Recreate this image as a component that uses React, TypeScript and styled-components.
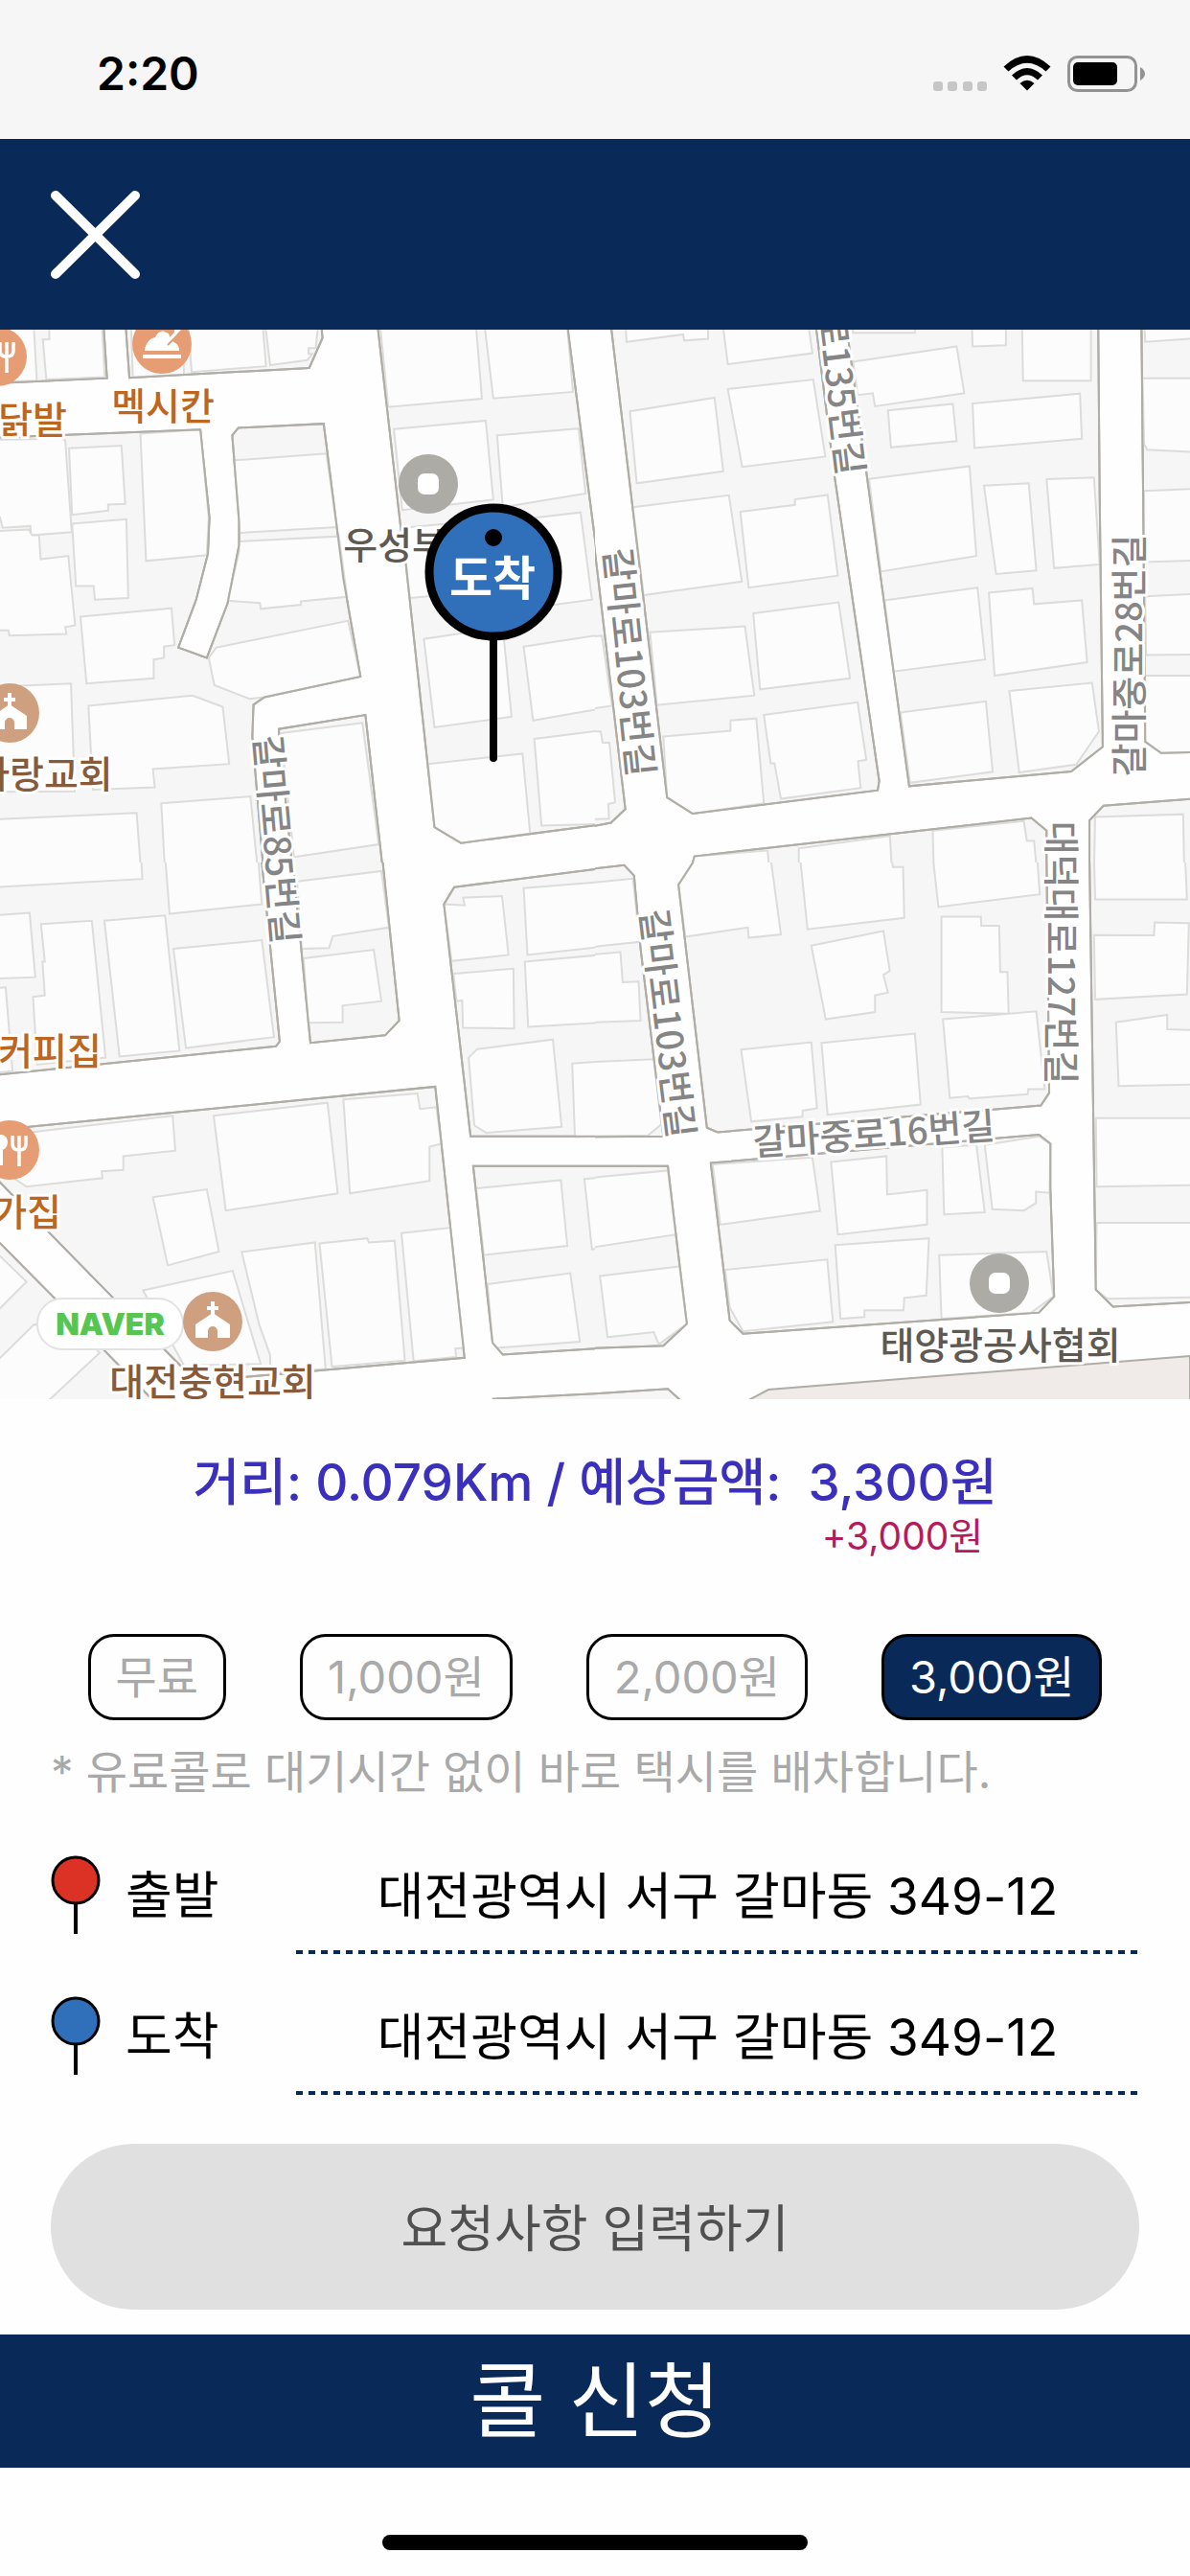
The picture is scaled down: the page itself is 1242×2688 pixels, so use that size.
import React, { useState } from "react";
import styled, { createGlobalStyle, css } from "styled-components";

const NAVY = "#092a59";
const FONT = `"Inter", "Noto Sans CJK KR", sans-serif`;
const MAP_FONT = `"Noto Sans CJK KR", "Noto Sans", sans-serif`;

const GlobalStyle = createGlobalStyle`
  *, *::before, *::after { box-sizing: border-box; }
  body { margin: 0; background: #fefefe; font-family: ${FONT}; color: #000; }
  button, input { font: inherit; color: inherit; margin: 0; }
`;

const Screen = styled.div`
  display: flex;
  flex-direction: column;
  min-height: 100vh;
`;

const StatusBar = styled.div`
  display: flex;
  align-items: center;
  justify-content: space-between;
  padding: 45px 45px 36px 101px;
  background: #f6f6f6;
`;

const Clock = styled.time`
  font-size: 48px;
  font-weight: 600;
  line-height: 64px;
`;

const StatusIcons = styled.div`
  display: flex;
  align-items: center;
`;

const Header = styled.header`
  display: flex;
  align-items: center;
  padding: 50px 50px 48px;
  background: ${NAVY};
`;

const CloseButton = styled.button`
  display: flex;
  padding: 0;
  border: 0;
  background: none;
  cursor: pointer;
`;

const MapView = styled.svg`
  display: block;
  width: 100%;
  height: auto;
  background: #fefefe;
`;

const Block = styled.polygon`
  fill: #f6f6f6;
  stroke: #b0ada6;
  stroke-width: 2px;
  vector-effect: non-scaling-stroke;
`;

const BlockEdge = styled(Block)`
  fill: none;
`;

const Building = styled.polygon`
  fill: #fcfcfc;
  stroke: #dcdcdb;
  stroke-width: 2px;
  vector-effect: non-scaling-stroke;
`;

const RoadName = styled.text`
  font: 500 38px ${MAP_FONT};
  fill: #858585;
  stroke: #fefefe;
  stroke-width: 6px;
  stroke-linejoin: round;
  paint-order: stroke;
  text-anchor: middle;
`;

const PlaceName = styled.text<{ $tone: string }>`
  font: 500 39px ${MAP_FONT};
  fill: ${(p) => p.$tone};
  stroke: #fefefe;
  stroke-width: 6px;
  stroke-linejoin: round;
  paint-order: stroke;
  text-anchor: middle;
`;

const MarkerText = styled.text`
  font: 700 49px ${MAP_FONT};
  fill: #fff;
  text-anchor: middle;
`;

const Brand = styled.text`
  font: 900 32px "Inter", sans-serif;
  fill: #57c552;
  text-anchor: middle;
`;

const Fare = styled.section`
  display: flex;
  justify-content: center;
  gap: 28px;
  padding-top: 55px;
  color: #3b2fbe;
  font-size: 53px;
  font-weight: 500;
  line-height: 64px;
`;

const FareAmount = styled.div`
  display: flex;
  flex-direction: column;
  align-items: center;
`;

const Surcharge = styled.span`
  color: #b31b5c;
  font-size: 39px;
  font-weight: 400;
  line-height: 48px;
`;

const CallOptions = styled.div`
  display: flex;
  justify-content: space-around;
  padding: 78px 53px 0;
`;

const OptionButton = styled.button<{ $active: boolean }>`
  height: 90px;
  padding: 0 26px;
  border: 3px solid #000;
  border-radius: 27px;
  background: transparent;
  color: #a9a9a9;
  font-size: 47px;
  line-height: 64px;
  cursor: pointer;
  ${(p) =>
    p.$active &&
    css`
      background: ${NAVY};
      color: #fff;
    `}
`;

const Note = styled.p`
  margin: 0;
  padding: 22px 53px 11px;
  color: #a9a9a9;
  font-size: 47px;
  line-height: 64px;
`;

const Route = styled.div`
  display: flex;
  flex-direction: column;
  padding: 0 53px;
`;

const Stop = styled.div`
  display: grid;
  grid-template-columns: 52px 152px 1fr;
  column-gap: 26px;
  height: 147px;
  font-size: 53px;
  line-height: 64px;
`;

const StopPin = styled.svg`
  margin-top: 43px;
`;

const StopLabel = styled.label`
  padding-top: 54px;
`;

const Address = styled.input`
  width: 100%;
  min-width: 0;
  height: 147px;
  padding: 18px 0 0;
  border: 0;
  outline: 0;
  text-align: center;
  background: repeating-linear-gradient(90deg, ${NAVY} 0 7px, transparent 7px 13px)
    left bottom / 100% 4px no-repeat;
`;

const Actions = styled.div`
  display: flex;
  flex-direction: column;
  gap: 26px;
  padding-top: 51px;
`;

const RequestButton = styled.button`
  height: 173px;
  margin: 0 53px;
  padding: 0 0 4px;
  border: 0;
  border-radius: 87px;
  background: #e0e0e0;
  color: #505050;
  font-size: 53px;
  cursor: pointer;
`;

const CallButton = styled.button`
  height: 139px;
  padding: 0;
  border: 0;
  background: ${NAVY};
  color: #fff;
  font-size: 86px;
  line-height: 128px;
  cursor: pointer;
`;

const HomeArea = styled.footer`
  display: flex;
  justify-content: center;
  padding: 70px 0 27px;
`;

const HomeIndicator = styled.div`
  width: 444px;
  height: 16px;
  border-radius: 8px;
  background: #000;
`;

type Tile = { x: number; y: number; blocks: string[]; buildings: string[] };

/* The street map is stored as four tiles, each on a 1568 x 1568 grid. */
const TILES: Tile[] = [
  {
    x: 0,
    y: 340,
    blocks: [
      "-20,-20 272,-20 282,153 -20,168",
      "330,-20 341,152 815,123 850,35 845,-20",
      "-20,327 528,303 552,560 548,665 517,800 470,940 545,970 600,810 630,640 630,570 612,320 628,298 853,286 905,740 950,1025 697,1085 668,1107 665,1200 695,1600 -20,1600",
      "735,1195 735,1178 963,1137 1010,1600 772,1600",
      "993,-20 1055,580 1070,700 1145,1465 1215,1511 1600,1455 1600,900 1493,-20",
    ],
    buildings: [
      "-20,-20 88,-20 97,160 -20,165",
      "130,-20 130,40 113,40 122,157 276,150 268,-20",
      "345,-20 350,150 485,142 480,-20",
      "495,-20 505,135 701,118 691,-20",
      "697,-20 712,115 810,100 823,82 813,82 813,65 832,65 840,-20",
      "-20,333 165,330 172,335 189,603 82,612 80,585 7,590 0,560 -20,560",
      "-20,600 75,595 85,612 103,612 107,682 180,672 198,875 172,880 175,900 25,905 22,890 -20,890",
      "182,358 320,350 330,520 285,522 285,540 190,552",
      "190,578 333,565 338,795 250,800 247,760 200,760",
      "370,315 528,303 550,560 545,670 385,687",
      "617,393 860,373 888,588 632,605",
      "630,630 893,615 915,792 793,805 793,815 687,827 685,810 600,803 630,660",
      "570,940 917,862 950,1025 697,1085 658,1090 565,1050 550,970",
      "212,850 452,825 460,933 432,937 432,970 405,975 405,1030 228,1045",
      "-20,1055 187,1045 197,1360 -20,1362",
      "233,1110 507,1080 587,1113 604,1280 403,1295 408,1348 245,1355",
      "-20,1442 360,1423 372,1600 -20,1600",
      "425,1395 660,1375 680,1600 435,1600",
      "740,1190 955,1160 998,1515 775,1552",
      "1000,-20 1253,-20 1270,213 1023,237",
      "1275,-20 1300,212 1510,193 1493,-20",
      "1038,302 1280,277 1300,508 1060,538",
      "1310,320 1525,300 1543,490 1325,530",
      "1060,590 1310,565 1330,770 1080,795",
      "1340,570 1530,545 1560,800 1360,830",
      "1117,915 1325,880 1348,1142 1145,1173",
      "1380,937 1600,900 1600,1115 1405,1153",
      "1128,1280 1377,1250 1397,1483 1215,1511 1145,1465",
      "1408,1207 1600,1180 1600,1455 1427,1460",
    ],
  },
  {
    x: 621,
    y: 340,
    blocks: [
      "-20,460 0,660 80,1412 42,1452 -20,1465",
      "40,-20 190,1378 257,1425 745,1357 749,1330 630,430 580,-20",
      "660,-20 828,1345 1255,1302 1338,1230 1330,500 1326,-20",
      "1440,-20 1445,560 1450,1215 1492,1248 1600,1245 1600,-20",
      "250,1600 262,1550 1150,1438 1190,1475 1190,1600",
      "1303,1600 1303,1445 1340,1402 1600,1380 1600,1600",
    ],
    buildings: [
      "80,-20 83,47 232,25 235,43 298,38 298,-20",
      "335,-20 350,112 573,80 560,-20",
      "92,250 315,210 338,425 110,460",
      "350,185 575,157 607,382 388,412",
      "100,530 353,495 387,747 128,787",
      "383,543 527,523 527,507 613,494 640,730 405,765",
      "145,895 395,878 420,1080 163,1108",
      "417,840 642,808 672,1030 435,1062",
      "180,1200 357,1183 357,1153 425,1147 445,1395 257,1425 190,1378",
      "445,1137 692,1100 715,1268 693,1272 700,1350 490,1382 473,1278 463,1278",
      "-20,910 18,905 45,1110 -20,1120",
      "-20,1185 15,1185 20,1218 38,1218 53,1392 35,1397 37,1440 -20,1442",
      "680,-20 680,20 843,20 843,-20",
      "993,-20 995,60 1083,57 1083,-20",
      "1125,-20 1128,160 1307,160 1307,-20",
      "680,105 953,60 973,197 738,235 732,197 692,202",
      "772,247 943,228 953,337 780,355",
      "995,227 1278,198 1283,330 1000,357",
      "722,447 987,410 1005,672 753,718",
      "1025,467 1143,460 1163,715 1057,725",
      "1190,448 1315,443 1330,697 1210,708",
      "763,802 1008,765 1028,975 787,1010",
      "1038,780 1153,767 1157,813 1283,802 1297,983 1053,1022",
      "805,1130 1030,1097 1048,1303 830,1335",
      "1092,1067 1310,1043 1328,1185 1268,1282 1118,1305",
      "1447,-20 1450,47 1600,35 1600,-20",
      "1443,153 1600,153 1600,370 1455,362 1447,345",
      "1447,482 1600,475 1600,685 1447,690",
      "1450,790 1600,782 1600,960 1452,962",
      "1450,1022 1600,1022 1600,1245 1492,1248 1450,1215",
      "250,1600 262,1550 455,1533 460,1600",
      "537,1600 537,1527 777,1490 783,1600",
      "893,1600 890,1475 1130,1447 1138,1505 1157,1505 1165,1600",
      "1315,1600 1318,1435 1550,1427 1553,1600",
    ],
  },
  {
    x: 0,
    y: 900,
    blocks: [
      "-20,-20 688,-20 690,0 737,523 727,537 -20,622",
      "770,-20 818,527 1015,505 1052,462 1007,-20",
      "-20,783 1147,655 1224,1447 520,1515 480,1475 305,1280 -20,912",
      "-20,1090 0,1112 150,1280 270,1420 400,1568 400,1600 -20,1600",
      "1197,72 1600,15 1600,800 1240,800 1170,122",
      "1247,887 1600,887 1600,1418 1325,1438 1298,1403",
      "1300,1600 1300,1567 1600,1550 1600,1600",
    ],
    buildings: [
      "-20,-20 372,-20 375,48 -20,73",
      "435,-20 447,150 690,122 680,-20",
      "-20,155 78,147 93,335 -20,340",
      "108,180 242,170 278,570 98,590 87,393 118,388 112,290 118,290",
      "275,170 435,155 473,550 315,567",
      "457,252 690,227 722,510 490,542",
      "-20,368 15,365 33,610 -20,615",
      "783,55 1005,25 1025,190 877,215 867,250 795,252",
      "800,280 985,255 1005,405 903,418 903,467 812,468",
      "80,788 455,740 462,842 325,858 325,898 268,902 270,922 70,947 40,925",
      "563,740 863,702 890,967 595,1017",
      "905,692 1100,675 1107,720 1150,715 1163,822 1132,830 1132,930 922,967",
      "403,978 545,955 577,1137 442,1177",
      "637,1138 830,1110 858,1480 712,1490 712,1440 683,1350",
      "842,1113 968,1098 972,1110 1040,1105 1067,1455 875,1473",
      "1058,1083 1187,1067 1222,1418 1200,1420 1202,1445 1090,1457",
      "377,1250 613,1193 687,1465 485,1470",
      "-20,1130 0,1150 70,1225 -20,1325",
      "-20,1470 90,1350 190,1360 263,1432 130,1570 100,1600 -20,1600",
      "1170,122 1225,125 1220,103 1323,98 1340,270 1190,288",
      "1380,75 1600,55 1600,245 1390,270",
      "1195,325 1353,310 1355,485 1220,483 1218,403 1203,405",
      "1383,290 1600,268 1600,467 1392,480",
      "1258,545 1457,517 1480,772 1282,790 1250,768 1235,570",
      "1508,587 1600,580 1600,800 1515,802",
      "1255,952 1478,928 1495,1120 1275,1147",
      "1540,925 1600,918 1600,1125 1560,1130",
      "1285,1232 1503,1200 1528,1400 1310,1418 1298,1403",
    ],
  },
  {
    x: 621,
    y: 900,
    blocks: [
      "-20,20 77,8 103,38 120,250 180,800 -20,802",
      "-20,887 192,887 213,1085 242,1348 180,1412 -20,1420",
      "270,-20 220,65 295,775 323,788 1175,710 1197,673 1190,-20",
      "1303,-20 1320,1248 1365,1298 1600,1283 1600,-20",
      "305,878 1170,795 1200,822 1200,950 1210,1268 1170,1315 390,1377 355,1338",
      "-20,1553 192,1538 222,1568 222,1600 -20,1600",
    ],
    buildings: [
      "-20,60 100,47 118,232 -20,248",
      "-20,270 67,262 73,350 115,348 120,462 -20,468",
      "-20,583 155,575 175,765 140,797 -20,800",
      "-20,922 192,900 213,1087 -20,1127",
      "13,1208 223,1180 242,1348 168,1408 155,1372 33,1387",
      "270,-20 220,65 238,217 403,190 405,220 490,210 462,-20",
      "540,-20 560,195 815,162 812,13 785,13 780,-20",
      "890,-20 905,130 1172,93 1165,-20",
      "570,243 760,200 777,317 760,328 772,380 738,388 738,437 608,458",
      "913,158 1017,158 1018,185 1065,185 1068,320 1087,320 1090,442 913,437",
      "385,547 570,525 585,718 547,725 547,743 412,757",
      "597,527 843,500 858,707 613,737",
      "917,458 1163,435 1185,662 1142,662 1140,677 987,690 983,683 935,688",
      "1315,-20 1318,108 1560,108 1555,-20",
      "1315,212 1473,213 1475,175 1565,177 1560,385 1318,400",
      "1373,467 1508,445 1508,487 1600,490 1600,648 1380,653",
      "1320,747 1600,747 1600,942 1322,947",
      "1322,1053 1600,1053 1600,1270 1350,1275 1320,1248",
      "310,882 573,862 593,1018 330,1058",
      "622,875 768,858 770,970 875,957 875,1058 640,1087",
      "633,1118 880,1098 873,1265 815,1272 813,1308 710,1308 710,1328 647,1333",
      "343,1190 612,1160 627,1342 390,1370 355,1300",
      "915,832 1005,825 1027,1022 920,1028",
      "1027,825 1170,800 1200,822 1198,965 1162,962 1162,995 1130,1017 1047,1013",
      "907,1147 1190,1137 1208,1268 1150,1315 913,1333",
    ],
  },
];

const TILE_GRID = 1568;
const TILE_W = 621;
const TILE_H = 560;

const ROADS = [
  { name: "갈마로103번길", x: 656, y: 691, angle: 84 },
  { name: "갈마로103번길", x: 696, y: 1068, angle: 83 },
  { name: "갈마로85번길", x: 288, y: 876, angle: 85 },
  { name: "로135번길", x: 877, y: 411, angle: 83 },
  { name: "갈마중로28번길", x: 1179, y: 684, angle: -90 },
  { name: "대덕대로127번길", x: 1107, y: 994, angle: 90 },
  { name: "갈마중로16번길", x: 912, y: 1184, angle: -4 },
];

const FOOD = "#bd6620";
const CHURCH = "#875a3a";
const OFFICE = "#5e5a52";

const PLACES = [
  { name: "닭발", x: 34, y: 452, tone: FOOD },
  { name: "멕시칸", x: 170, y: 438, tone: FOOD },
  { name: "사랑교회", x: 46, y: 822, tone: CHURCH },
  { name: "우성부동산", x: 448, y: 583, tone: OFFICE },
  { name: "커피집", x: 52, y: 1111, tone: FOOD },
  { name: "가집", x: 28, y: 1279, tone: FOOD },
  { name: "대전충현교회", x: 222, y: 1456, tone: CHURCH },
  { name: "태양광공사협회", x: 1044, y: 1418, tone: OFFICE },
];

const CutleryIcon = ({ x, y }: { x: number; y: number }) => (
  <g transform={`translate(${x} ${y})`}>
    <circle r="31" fill="#e79d74" />
    <ellipse cx="-9" cy="-8" rx="7" ry="8" fill="#fff" />
    <path d="M-9 0V16" stroke="#fff" strokeWidth="4" />
    <path d="M3-15V-6Q3 0 10 0T17-6V-15M10-15V17" fill="none" stroke="#fff" strokeWidth="3.5" />
  </g>
);

const ChickenIcon = ({ x, y }: { x: number; y: number }) => (
  <g transform={`translate(${x} ${y})`}>
    <circle r="31" fill="#e79d74" />
    <path
      d="M-18 7C-17-2-12-6-7-7C-4-14 2-15 4-12Q8-12 8-7L13-12Q12-16 16-16L20-20L22-17L18-13L10-4L14-1Q18 1 18 7Z"
      fill="#fff"
    />
    <path d="M6 1L12-5" stroke="#e79d74" strokeWidth="2" />
    <path d="M-20 13H20" stroke="#fff" strokeWidth="4" />
  </g>
);

const ChurchIcon = ({ x, y }: { x: number; y: number }) => (
  <g transform={`translate(${x} ${y})`}>
    <circle r="31" fill="#cfa080" />
    <path d="M0-21V-6M-6-14H6" stroke="#fff" strokeWidth="4" />
    <path d="M0-9L18 3V17H5V10A5 5 0 0 0-5 10V17H-18V3Z" fill="#fff" />
  </g>
);

const OfficeIcon = ({ x, y }: { x: number; y: number }) => (
  <g transform={`translate(${x} ${y})`}>
    <circle r="31" fill="#adaba5" />
    <rect x="-11" y="-11" width="22" height="22" rx="7" fill="#fff" />
  </g>
);

const StreetMap = () => (
  <MapView viewBox="0 344 1242 1116" role="img" aria-label="지도">
    {TILES.map((tile) => (
      <svg
        key={`${tile.x}-${tile.y}`}
        x={tile.x}
        y={tile.y}
        width={TILE_W}
        height={TILE_H}
        viewBox={`0 0 ${TILE_GRID} ${TILE_GRID}`}
        preserveAspectRatio="none"
      >
        {tile.blocks.map((points) => (
          <Block key={points} points={points} />
        ))}
        {tile.buildings.map((points) => (
          <Building key={points} points={points} />
        ))}
        {tile.blocks.map((points) => (
          <BlockEdge key={points} points={points} />
        ))}
      </svg>
    ))}
    <path d="M772 1466L802 1450L1242 1415V1466Z" fill="#f0ebe8" stroke="#b0ada6" strokeWidth="2" />
    <CutleryIcon x={-3} y={372} />
    <ChickenIcon x={169} y={359} />
    <OfficeIcon x={447} y={505} />
    <ChurchIcon x={10} y={744} />
    <CutleryIcon x={10} y={1200} />
    <OfficeIcon x={1043} y={1339} />
    {ROADS.map((road) => (
      <RoadName
        key={`${road.x}-${road.y}`}
        transform={`translate(${road.x} ${road.y}) rotate(${road.angle})`}
        dy="13"
      >
        {road.name}
      </RoadName>
    ))}
    {PLACES.map((place) => (
      <PlaceName key={place.name} x={place.x} y={place.y} $tone={place.tone}>
        {place.name}
      </PlaceName>
    ))}
    <rect x="39" y="1355" width="152" height="53" rx="26" fill="#fff" stroke="#e2e2e2" strokeWidth="2" />
    <Brand x="115" y="1393">NAVER</Brand>
    <ChurchIcon x={222} y={1379} />
    <path d="M515 664V791" stroke="#000" strokeWidth="8" strokeLinecap="round" />
    <circle cx="515" cy="597" r="67" fill="#3070bb" stroke="#000" strokeWidth="9" />
    <circle cx="515" cy="561" r="9" />
    <MarkerText x="514" y="621">도착</MarkerText>
  </MapView>
);

const OPTIONS = [0, 1000, 2000, 3000];
const won = (value: number) => `${value.toLocaleString("en-US")}원`;

const STOPS = [
  { id: "origin", label: "출발", color: "#dc3226", address: "대전광역시 서구 갈마동 349-12" },
  { id: "destination", label: "도착", color: "#3070bb", address: "대전광역시 서구 갈마동 349-12" },
];

export default function App() {
  const [extra, setExtra] = useState(3000);

  return (
    <Screen>
      <GlobalStyle />
      <StatusBar>
        <Clock>2:20</Clock>
        <StatusIcons>
          <svg width="224" height="40" viewBox="0 0 224 40" aria-hidden="true">
            <g fill="#c6c6c6">
              <rect x="1" y="28" width="10" height="10" rx="3" />
              <rect x="16" y="28" width="10" height="10" rx="3" />
              <rect x="32" y="28" width="10" height="10" rx="3" />
              <rect x="47" y="28" width="10" height="10" rx="3" />
            </g>
            <path d="M74.500 12.500Q99-10.500 123.500 12.500L118.500 17.500Q99 0 79.500 17.500Z" />
            <path d="M83 21.500Q99 6.500 115 21.500L110 26.500Q99 16 88 26.500Z" />
            <path d="M91.500 30Q99 23.500 106.500 30L99 37.500Z" />
            <rect x="142.500" y="2.500" width="70" height="35" rx="9" fill="none" stroke="#939393" strokeWidth="3" />
            <rect x="147" y="8" width="46" height="24" rx="5" />
            <path d="M217 13Q222 16 222 20T217 27Z" fill="#939393" />
          </svg>
        </StatusIcons>
      </StatusBar>
      <Header>
        <CloseButton type="button" aria-label="닫기">
          <svg width="100" height="101" viewBox="0 0 100 101" aria-hidden="true">
            <path d="M8 9L91 91M91 9L8 91" stroke="#fff" strokeWidth="10" strokeLinecap="round" />
          </svg>
        </CloseButton>
      </Header>
      <StreetMap />
      <Fare>
        <span>거리: 0.079Km / 예상금액:</span>
        <FareAmount>
          <span>3,300원</span>
          <Surcharge>+{won(extra)}</Surcharge>
        </FareAmount>
      </Fare>
      <CallOptions>
        {OPTIONS.map((value) => (
          <OptionButton
            key={value}
            type="button"
            aria-pressed={value === extra}
            $active={value === extra}
            onClick={() => setExtra(value)}
          >
            {value === 0 ? "무료" : won(value)}
          </OptionButton>
        ))}
      </CallOptions>
      <Note>* 유료콜로 대기시간 없이 바로 택시를 배차합니다.</Note>
      <Route>
        {STOPS.map((stop) => (
          <Stop key={stop.id}>
            <StopPin width="52" height="84" viewBox="0 0 52 84" aria-hidden="true">
              <path d="M26 50V83" stroke="#000" strokeWidth="4" />
              <circle cx="26" cy="27" r="24" fill={stop.color} stroke="#000" strokeWidth="3" />
            </StopPin>
            <StopLabel htmlFor={stop.id}>{stop.label}</StopLabel>
            <Address id={stop.id} type="text" readOnly value={stop.address} />
          </Stop>
        ))}
      </Route>
      <Actions>
        <RequestButton type="button">요청사항 입력하기</RequestButton>
        <CallButton type="button">콜 신청</CallButton>
      </Actions>
      <HomeArea>
        <HomeIndicator />
      </HomeArea>
    </Screen>
  );
}
